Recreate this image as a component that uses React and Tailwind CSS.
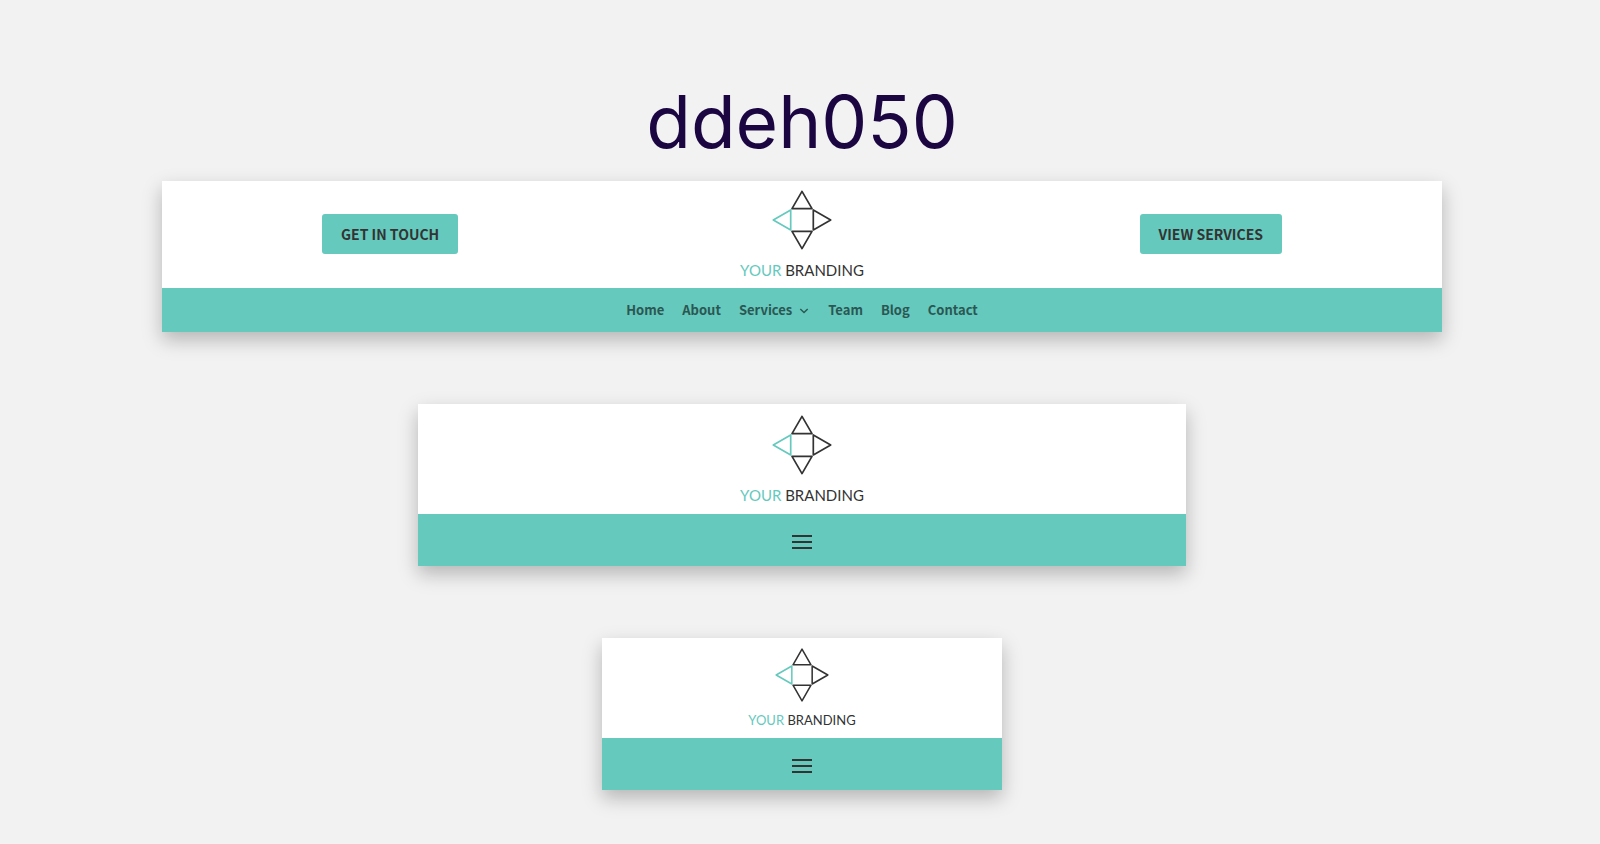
import React from "react";

function LogoMark({ className }) {
  return (
    <svg viewBox="-30 -30 60 60" className={className} fill="none" strokeWidth="1.7" strokeLinejoin="round" aria-hidden="true">
      <path d="M0 -28.7L-10 -11.3H10Z" stroke="#333333" />
      <path d="M28.7 0L11.3 -10V10Z" stroke="#333333" />
      <path d="M0 28.7L-10 11.3H10Z" stroke="#333333" />
      <path d="M-28.7 0L-11.3 -10V10Z" stroke="#65c9bd" />
    </svg>
  );
}

function Logo({ small }) {
  return (
    <a href="#" className="flex flex-col items-center whitespace-nowrap">
      <LogoMark className={small ? "size-[54px]" : "size-[60px]"} />
      <span
        className={
          small
            ? "mt-2 font-['Lato',sans-serif] text-[13px] leading-5 text-[#333333]"
            : "mt-2.5 font-['Lato',sans-serif] text-[15px] leading-5 text-[#333333]"
        }
      >
        <span className="text-[#65c9bd]">YOUR</span> BRANDING
      </span>
    </a>
  );
}

function MenuButton() {
  return (
    <button type="button" aria-label="Open menu" className="flex flex-col gap-1">
      <span className="h-0.5 w-5 bg-[#333333]" />
      <span className="h-0.5 w-5 bg-[#333333]" />
      <span className="h-0.5 w-5 bg-[#333333]" />
    </button>
  );
}

function ActionButton({ children }) {
  return (
    <button
      type="button"
      className="h-10 rounded-[3px] bg-[#65c9bd] px-[19px] text-sm leading-5 font-bold whitespace-nowrap text-[#333333]"
    >
      {children}
    </button>
  );
}

const links = ["Home", "About", "Services", "Team", "Blog", "Contact"];

export default function App() {
  return (
    <main className="flex min-h-screen flex-col items-center bg-[#f2f2f2] pt-[86px] pb-[54px] pl-1 font-['Noto_Sans_CJK_SC',sans-serif]">
      <h1 className="font-['Inter',sans-serif] text-[73px] leading-[72px] text-[#1b0642]">ddeh050</h1>

      <header className="mt-[23px] w-full max-w-[1280px] bg-white shadow-[0_8px_18px_rgba(0,0,0,0.25)]">
        <div className="grid grid-cols-[1fr_auto_1fr] items-center px-[12.5%] pt-[9px] pb-2">
          <div className="flex justify-start pb-0.5">
            <ActionButton>GET IN TOUCH</ActionButton>
          </div>
          <Logo />
          <div className="flex justify-end pb-0.5">
            <ActionButton>VIEW SERVICES</ActionButton>
          </div>
        </div>
        <nav className="flex h-11 items-center justify-center gap-[18px] bg-[#65c9bd] text-[13px] leading-5 font-bold text-[#2b5753]">
          {links.map((label) => (
            <a key={label} href="#" className="flex items-center gap-1.5">
              {label}
              {label === "Services" && (
                <svg viewBox="0 0 12 12" className="mt-0.5 size-3" fill="none" stroke="currentColor" strokeWidth="1.4" aria-hidden="true">
                  <path d="M2.3 4L6 7.6L9.7 4" />
                </svg>
              )}
            </a>
          ))}
        </nav>
      </header>

      <header className="mt-[72px] w-full max-w-[768px] bg-white shadow-[0_8px_18px_rgba(0,0,0,0.25)]">
        <div className="flex justify-center pt-[11px] pb-[9px]">
          <Logo />
        </div>
        <div className="flex h-[52px] items-center justify-center bg-[#65c9bd] pt-1">
          <MenuButton />
        </div>
      </header>

      <header className="mt-[72px] w-full max-w-[400px] bg-white shadow-[0_8px_18px_rgba(0,0,0,0.25)]">
        <div className="flex justify-center pt-2.5 pb-2">
          <Logo small />
        </div>
        <div className="flex h-[52px] items-center justify-center bg-[#65c9bd] pt-1">
          <MenuButton />
        </div>
      </header>
    </main>
  );
}
